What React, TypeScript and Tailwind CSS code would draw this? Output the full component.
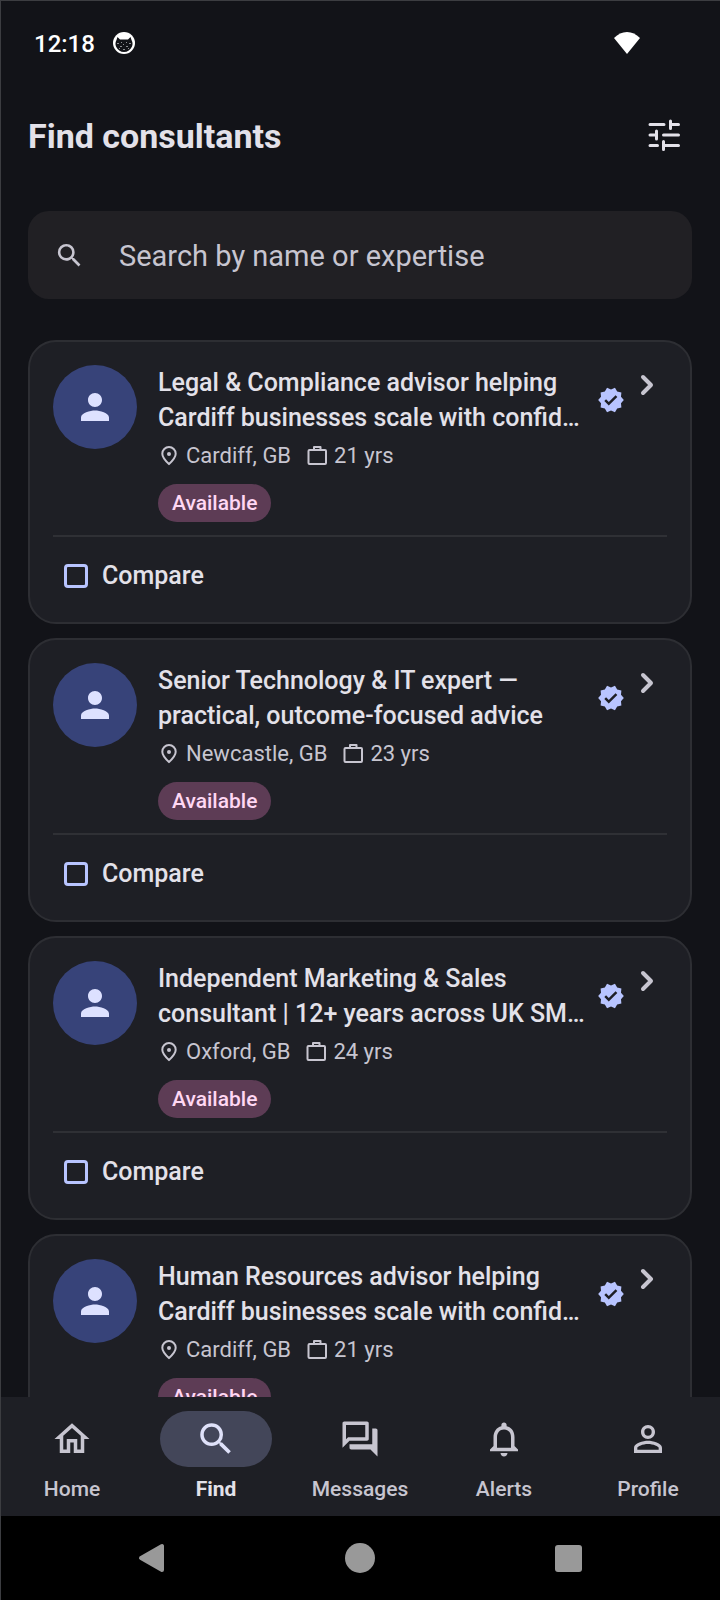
import type { ReactNode } from "react"
import {
    MdOutlineHome, MdSearch, MdOutlineForum, MdNotificationsNone,
    MdPersonOutline, MdPerson, MdVerified,
} from "react-icons/md"

const consultants = [
    { id: 1, title: "Legal & Compliance advisor helping Cardiff businesses scale with confid…", city: "Cardiff, GB", years: "21 yrs" },
    { id: 2, title: "Senior Technology & IT expert — practical, outcome-focused advice", city: "Newcastle, GB", years: "23 yrs" },
    { id: 3, title: "Independent Marketing & Sales consultant | 12+ years across UK SM…", city: "Oxford, GB", years: "24 yrs" },
    { id: 4, title: "Human Resources advisor helping Cardiff businesses scale with confid…", city: "Cardiff, GB", years: "21 yrs" },
]

export default function App() {
    return (
        <div className={`
            relative h-screen flex flex-col overflow-hidden
            bg-[#121318] font-[Roboto,sans-serif] text-[#e3e1e9]
            after:absolute after:inset-0 after:pointer-events-none
            after:border-l after:border-t after:border-[#3c3d41]
        `}>
            <StatusBar />
            <Header />
            <SearchBox />
            <main className="flex-1 min-h-0 overflow-hidden flex flex-col gap-[14px] px-7 pt-[41px]">
                {consultants.map((c) => (
                    <ConsultantCard key={c.id} id={c.id} title={c.title} city={c.city} years={c.years} />
                ))}
            </main>
            <BottomNav />
            <SystemNav />
        </div>
    )
}

function StatusBar() {
    return (
        <div className="shrink-0 flex items-center h-[86px] pl-[34px] pr-20 text-white">
            <span className="pt-[2px] text-[24px] font-medium">12:18</span>
            <CatIcon />
            <svg viewBox="0 0 26 22" className="w-[26px] h-[22px] ml-auto" aria-hidden="true">
                <path fill="white" d="M13 22L0 6C4 2 8 0 13 0s9 2 13 6z" />
            </svg>
        </div>
    )
}

function CatIcon() {
    return (
        <svg viewBox="0 0 24 24" className="w-6 h-6 ml-[17px]" aria-hidden="true">
            <circle cx="12" cy="12" r="11" fill="white" />
            <path fill="#121318" d="M5.500 6l2.500 2.500h8L18.500 6l1 3c1 2 1.500 4 .5 6.500-1.500 3.500-4.500 5.500-8 5.500s-6.500-2-8-5.500C3 13 3.500 11 4.500 9z" />
            <path fill="#8b8c90" d="M5 12h2v1H5zM17 12h2v1h-2zM8 15h2v1H8zM14 15h2v1h-2zM11 18h2v1h-2zM9 11h1v1H9zM14 11h1v1h-1zM11 13h1v1h-1zM7 17h1v1H7zM16 17h1v1h-1z" />
        </svg>
    )
}

function Header() {
    return (
        <header className="shrink-0 flex items-center justify-between h-[98px] pl-7 pr-10">
            <h1 className="pt-[3px] text-[34px] font-bold">Find consultants</h1>
            <button type="button" aria-label="Filters">
                <svg viewBox="0 0 32 32" className="w-8 h-8" fill="none" stroke="currentColor" strokeWidth="3" strokeLinecap="round" aria-hidden="true">
                    <path d="M2 5.500h14M22.500 2v7.500M22.500 5.500h8M2 16h6.500M8.500 12v8M15.500 16h15M2 26.500h7.500M15.500 22.500v8M15.500 26.500h15" />
                </svg>
            </button>
        </header>
    )
}

function SearchBox() {
    return (
        <label className="shrink-0 flex items-center h-[88px] mx-7 mt-[27px] px-[26px] rounded-[21px] bg-[#212024]">
            <MdSearch className="w-[31px] h-[31px] shrink-0 text-[#c7c5d0]" />
            <input
                type="text"
                aria-label="Search by name or expertise"
                placeholder="Search by name or expertise"
                className="flex-1 min-w-0 ml-[34px] pt-[3px] text-[29px] bg-transparent outline-none placeholder:text-[#c7c5d0]"
            />
        </label>
    )
}

type CardProps = { id: number; title: string; city: string; years: string }

function ConsultantCard({ id, title, city, years }: CardProps) {
    return (
        <article className="shrink-0 rounded-[28px] border-2 border-[#2d2e33] bg-[#1e1f25] px-[23px] pt-[23px] pb-[18px]">
            <div className="flex items-start">
                <div className="flex items-center justify-center w-[84px] h-[84px] shrink-0 rounded-full bg-[#374379]">
                    <MdPerson className="w-[42px] h-[42px] text-[#dde1ff]" />
                </div>
                <div className="flex-1 min-w-0 ml-[21px]">
                    <div className="flex items-center">
                        <h2 className="flex-1 text-[25px] leading-[35px] font-medium">{title}</h2>
                        <MdVerified className="w-7 h-7 shrink-0 ml-1 text-[#b8c4ff]" />
                    </div>
                    <div className="flex items-center mt-[7px] text-[22px] leading-[28px] text-[#c7c5d0]">
                        <PinIcon />
                        <span className="ml-1">{city}</span>
                        <BagIcon />
                        <span className="ml-1">{years}</span>
                    </div>
                    <div className="flex mt-[14px]">
                        <span className="flex items-center h-[38px] px-[14px] rounded-full bg-[#5d3c55] text-[21px] leading-[28px] font-medium text-[#ffd7f3]">
                            Available
                        </span>
                    </div>
                </div>
                <button type="button" aria-label="Open profile" className="ml-[10px] mr-2 mt-2">
                    <svg viewBox="0 0 24 24" className="w-6 h-6" fill="none" stroke="#c7c5d0" strokeWidth="4" strokeLinecap="round" strokeLinejoin="round" aria-hidden="true">
                        <path d="M8 4l8 8-8 8" />
                    </svg>
                </button>
            </div>
            <hr className="mt-[13px] border-t-2 border-[#2f3035]" />
            <div className="flex items-center h-14 mt-[11px] pl-[11px]">
                <input
                    id={`compare-${id}`}
                    type="checkbox"
                    className="appearance-none w-6 h-6 rounded-[4px] border-[3px] border-[#b8c4ff] checked:bg-[#b8c4ff]"
                />
                <label htmlFor={`compare-${id}`} className="pl-[14px] text-[25px] font-medium">Compare</label>
            </div>
        </article>
    )
}

function PinIcon() {
    return (
        <svg viewBox="0 0 24 24" className="w-6 h-6 shrink-0" fill="none" stroke="currentColor" strokeWidth="2" aria-hidden="true">
            <path d="M11 20c4-3.700 6.700-6.800 6.700-10.300a6.700 6.700 0 0 0-13.400 0c0 3.500 2.700 6.600 6.700 10.300z" />
            <circle cx="11" cy="10" r="2" fill="currentColor" stroke="none" />
        </svg>
    )
}

function BagIcon() {
    return (
        <svg viewBox="0 0 24 24" className="w-6 h-6 shrink-0 ml-[15px]" fill="none" stroke="currentColor" strokeWidth="2" strokeLinejoin="round" aria-hidden="true">
            <rect x="2.500" y="6" width="17.500" height="14" rx="1" />
            <path d="M8 5.500V3h6.500v2.500" />
        </svg>
    )
}

function BottomNav() {
    return (
        <nav className="shrink-0 flex h-[119px] pt-[14px] bg-[#1e1f25]">
            <NavItem label="Home" icon={<MdOutlineHome />} />
            <NavItem label="Find" icon={<MdSearch />} active />
            <NavItem label="Messages" icon={<MdOutlineForum />} />
            <NavItem label="Alerts" icon={<MdNotificationsNone />} />
            <NavItem label="Profile" icon={<MdPersonOutline />} />
        </nav>
    )
}

function NavItem({ label, icon, active }: { label: string; icon: ReactNode; active?: boolean }) {
    return (
        <a href="#" className={`flex-1 flex flex-col items-center ${active ? "text-[#e3e1e9]" : "text-[#c7c5d0]"}`}>
            <span className={`flex items-center justify-center w-28 h-14 rounded-full text-[42px] ${active ? "bg-[#434659] text-[#dfe1f9]" : ""}`}>
                {icon}
            </span>
            <span className={`mt-2 text-[21px] leading-[28px] ${active ? "font-bold" : "font-medium"}`}>{label}</span>
        </a>
    )
}

function SystemNav() {
    return (
        <div className="shrink-0 grid grid-cols-3 items-center justify-items-center h-[84px] px-12 bg-black">
            <button type="button" aria-label="Back">
                <svg viewBox="0 0 30 30" className="w-[30px] h-[30px]" aria-hidden="true">
                    <path d="M4 15L25 3v24z" fill="#999999" stroke="#999999" strokeWidth="4" strokeLinejoin="round" />
                </svg>
            </button>
            <button type="button" aria-label="Home screen" className="w-[30px] h-[30px] rounded-full bg-[#999999]"></button>
            <button type="button" aria-label="Recent apps" className="w-[27px] h-[27px] rounded-[3px] bg-[#999999]"></button>
        </div>
    )
}
